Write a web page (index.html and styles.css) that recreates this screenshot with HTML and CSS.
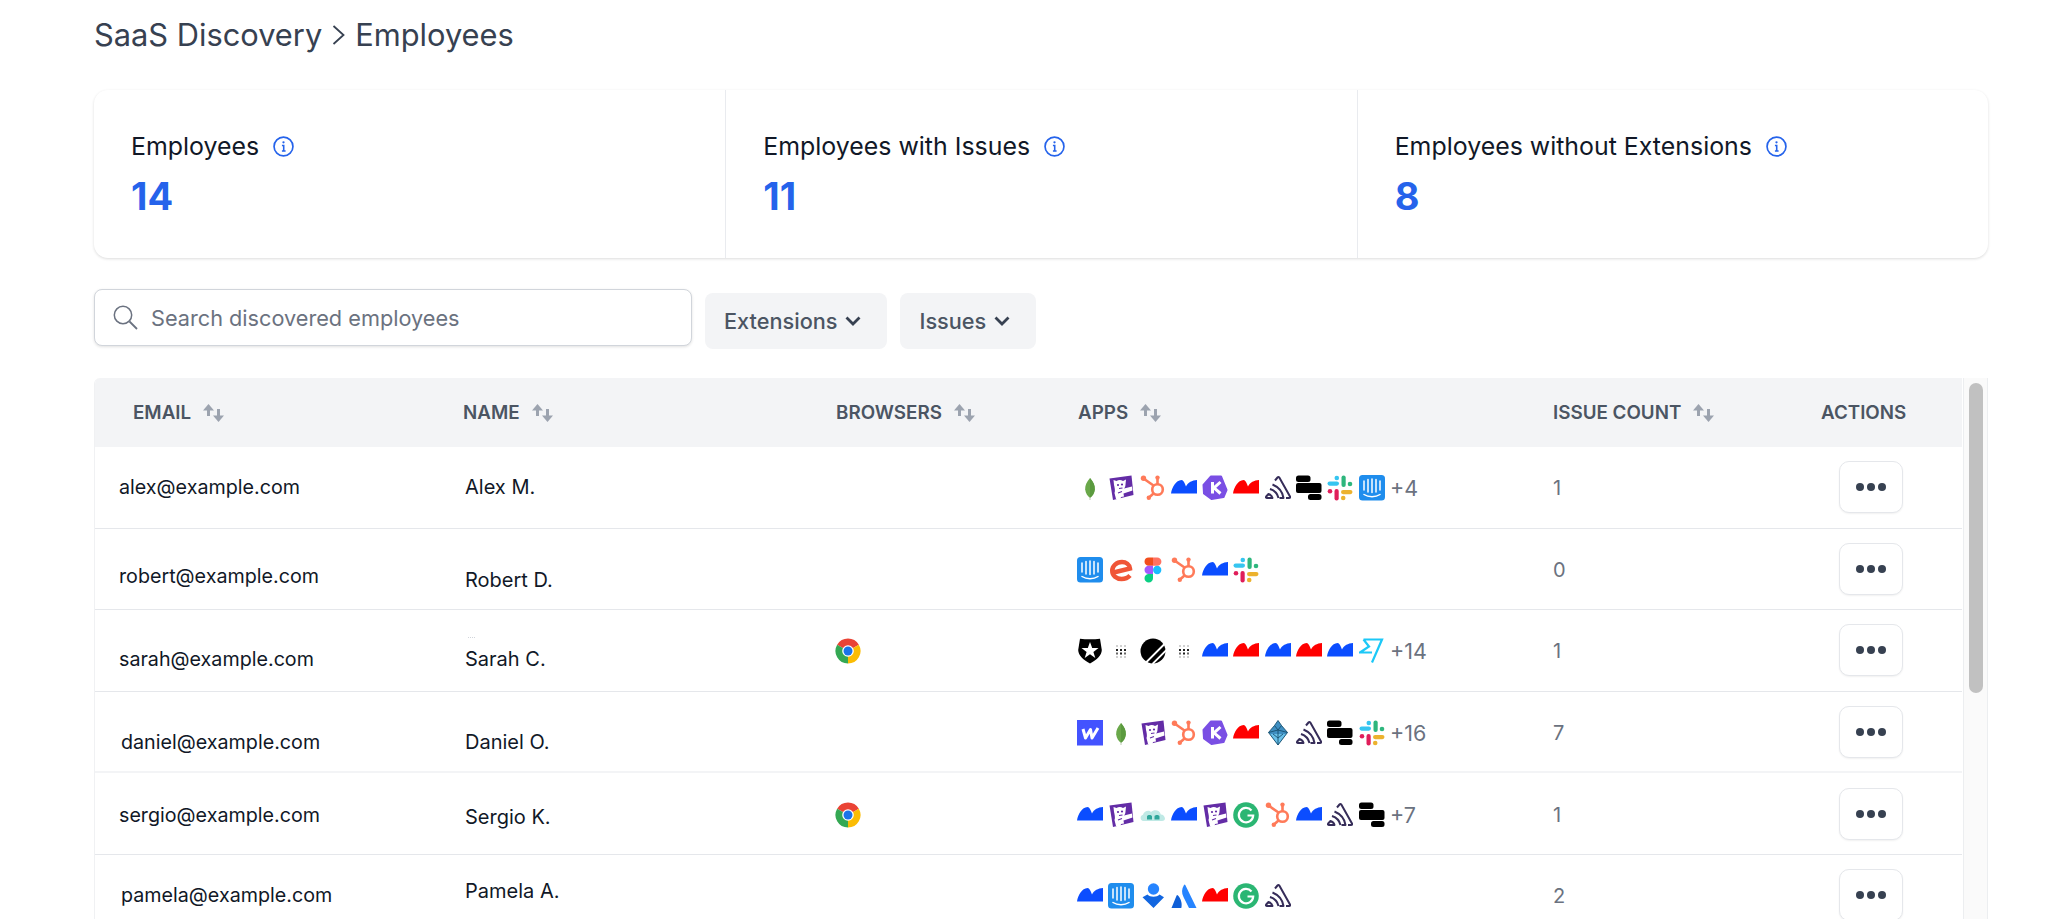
FILE: index.html
```html
<!DOCTYPE html>
<html lang="en">
<head>
  <meta charset="UTF-8">
  <meta name="viewport" content="width=device-width, initial-scale=1.0">
  <title>SaaS Discovery | Employees</title>
  <link rel="stylesheet" href="styles.css">
</head>
<body>
  <svg class="icon-defs" xmlns="http://www.w3.org/2000/svg">
    <symbol id="i-mongo" viewBox="0 0 26 26">
      <path d="M13 3C9.5 7 8 10.5 8.2 14.500C8.500 18.500 11 21.500 13 23C15 21.500 17.500 18.500 17.800 14.500C18 10.500 16.500 7 13 3Z" fill="#6aa84a"/>
      <path d="M13 3C16.500 7 18 10.500 17.800 14.500C17.500 18.500 15 21.500 13 23Z" fill="#5b9a3f"/>
      <path d="M13 22V25" stroke="#b9c9b0" stroke-width="1"/>
    </symbol>
    <symbol id="i-datadog" viewBox="0 0 26 26">
      <path d="M1.500 3.500L23.500 0.500L25.500 20L5 25Z" fill="#632ca6"/>
      <path d="M5.500 5L8.500 6C10.500 4.800 13 4.800 15 6L18 4.500L17.500 9.500C17.500 11 17 12.500 16 13.500L24 11.500L24.500 15.500L15.500 18.500L16 21.500L13 22L12.500 24L8 24L6.500 18C7.500 16 6.500 12 6 10Z" fill="#fff"/>
      <circle cx="10" cy="10" r="1.100" fill="#632ca6"/>
      <circle cx="14" cy="9.500" r="1.100" fill="#632ca6"/>
      <path d="M11 13.500L14.500 13M10 18L14 16.500" stroke="#632ca6" stroke-width="1.100"/>
    </symbol>
    <symbol id="i-hubspot" viewBox="0 0 26 26">
      <g fill="none" stroke="#ff7a59" stroke-width="2.600">
        <circle cx="17.500" cy="14.500" r="5.300"/>
        <path d="M17.500 9V3M13.500 10.500L3.500 3.500M13.500 18.500L9 22.500"/>
      </g>
      <g fill="#ff7a59">
        <circle cx="17.500" cy="2.600" r="2.200"/>
        <circle cx="3.500" cy="3.200" r="2.700"/>
        <circle cx="8.800" cy="22.800" r="2.200"/>
      </g>
    </symbol>
    <symbol id="i-hump" viewBox="0 0 26 26">
      <path d="M0 18.500C1 12 5 5.300 10.500 5C12.500 5 13.700 8 15 11.500C17 7.500 21 5.300 26 5V18.500Z" fill="currentColor"/>
    </symbol>
    <symbol id="i-kustomer" viewBox="0 0 26 26">
      <path d="M9 1.500H19L24.500 15L21.500 22L9.500 24L2 18.500L1.500 10Z" fill="#7a4fe4" stroke="#7a4fe4" stroke-width="2" stroke-linejoin="round"/>
      <path d="M10.500 7V18.500M18.500 7L12 12.800L18.500 18.500" fill="none" stroke="#fff" stroke-width="3"/>
    </symbol>
    <symbol id="i-sentry" viewBox="0 0 26 26">
      <g fill="none" stroke="#362d59" stroke-width="2" stroke-linejoin="round">
        <path d="M10 5.500L12.500 2.500C13 1.800 13.800 1.800 14.300 2.500L25 21.500C25.500 22.500 25 23 24 23H21"/>
        <path d="M7.500 9.500C13.500 12 17.500 16.500 18.500 23H14.500"/>
        <path d="M5 14C9.500 15.500 12.500 18.500 13.500 23"/>
        <path d="M3.500 19C5.500 19.500 7 21 7.500 23H2C1 23 0.700 22.500 1.200 21.500Z"/>
      </g>
    </symbol>
    <symbol id="i-bars" viewBox="0 0 26 26">
      <rect x="0" y="0.500" width="14.500" height="6.500" rx="2.500" fill="#000"/>
      <rect x="0" y="8" width="25.500" height="10" rx="2" fill="#000"/>
      <rect x="12" y="19" width="13.500" height="6" rx="2.500" fill="#000"/>
    </symbol>
    <symbol id="i-slack" viewBox="0 0 26 26">
      <g fill="#36c5f0">
        <rect x="0.500" y="6.500" width="11.500" height="4.200" rx="2.100"/>
        <circle cx="9.800" cy="3" r="2.300"/>
      </g>
      <g fill="#2eb67d">
        <rect x="14.500" y="0.500" width="4.200" height="11.500" rx="2.100"/>
        <circle cx="23" cy="9" r="2.300"/>
      </g>
      <g fill="#ecb22e">
        <rect x="14" y="15" width="11.500" height="4.200" rx="2.100"/>
        <circle cx="16.200" cy="23" r="2.300"/>
      </g>
      <g fill="#e01e5a">
        <rect x="7.500" y="14" width="4.200" height="11.500" rx="2.100"/>
        <circle cx="3" cy="16.300" r="2.300"/>
      </g>
    </symbol>
    <symbol id="i-intercom" viewBox="0 0 26 26">
      <rect x="0" y="0" width="26" height="25.500" rx="3.500" fill="#1f8ded"/>
      <path d="M5 6V15M9 4.500V17M13 4V17.500M17 4.500V17M21 6V15" stroke="#fff" stroke-width="1.500" stroke-linecap="round"/>
      <path d="M5 19.500C9.500 22.500 16.500 22.500 21 19.500" fill="none" stroke="#fff" stroke-width="1.500" stroke-linecap="round"/>
    </symbol>
    <symbol id="i-eventbrite" viewBox="0 0 26 26">
      <path d="M5.500 15.500L22 11.500C21.500 7.500 18 5 14 5C8.500 5 4.200 8.800 4.200 13.800C4.200 18.800 8.500 22 13.500 22C17 22 20 20.800 22 18.500" fill="none" stroke="#f05537" stroke-width="4.400"/>
    </symbol>
    <symbol id="i-figma" viewBox="0 0 26 26">
      <path d="M4.500 4.500A4.250 4.250 0 0 1 8.750 0.500H13V8.800H8.750A4.150 4.150 0 0 1 4.500 4.500Z" fill="#f24e1e"/>
      <path d="M13 0.500H17.250A4.150 4.150 0 0 1 17.250 8.800H13Z" fill="#ff7262"/>
      <path d="M4.500 13A4.150 4.150 0 0 1 8.750 8.800H13V17.100H8.750A4.150 4.150 0 0 1 4.500 13Z" fill="#a259ff"/>
      <circle cx="17.200" cy="13" r="4.150" fill="#1abcfe"/>
      <path d="M4.500 21.300A4.150 4.150 0 0 1 8.750 17.100H13V21.300A4.200 4.200 0 0 1 4.500 21.300Z" fill="#0acf83"/>
    </symbol>
    <symbol id="i-auth0" viewBox="0 0 26 26">
      <path d="M3 0.800C9 1.500 17 1.500 23 0.800L24.800 12C24.800 17 20 22 13 25.500C6 22 1.200 17 1.200 12Z" fill="#000"/>
      <path d="M13 4L15.200 10.100H21.500L16.400 13.900L18.300 20L13 16.300L7.700 20L9.600 13.900L4.500 10.100H10.800Z" fill="#fff"/>
    </symbol>
    <symbol id="i-dots" viewBox="0 0 26 26">
      <g fill="#d0d0d0">
        <rect x="8" y="7" width="2" height="2"/><rect x="12" y="7" width="2" height="2"/><rect x="16" y="7" width="2" height="2"/>
        <rect x="8" y="18" width="2" height="2"/><rect x="12" y="18" width="2" height="2"/><rect x="16" y="18" width="2" height="2"/>
      </g>
      <g fill="#222">
        <rect x="8" y="11" width="2" height="2"/><rect x="12" y="11" width="2" height="2"/><rect x="16" y="11" width="2" height="2"/>
        <rect x="8" y="14.500" width="2" height="2" fill="#666"/><rect x="12" y="14.500" width="2" height="2"/><rect x="16" y="14.500" width="2" height="2" fill="#666"/>
      </g>
    </symbol>
    <symbol id="i-orbit" viewBox="0 0 26 26">
      <circle cx="13" cy="13" r="12.500" fill="#000"/>
      <path d="M6 24.500L25 5.500M12.500 26L26.500 12" stroke="#fff" stroke-width="1.800"/>
    </symbol>
    <symbol id="i-wise" viewBox="0 0 26 26">
      <path d="M4.500 1.500H23L13 24.500M4.500 1.500L10 8.500L1 14.500H13" fill="none" stroke="#1cc8f7" stroke-width="2.200"/>
    </symbol>
    <symbol id="i-webflow" viewBox="0 0 26 26">
      <rect x="0" y="0" width="26" height="25.500" fill="#4353ff"/>
      <path d="M6 9L8.500 18L13.500 9.500L15 18L21 8" fill="none" stroke="#fff" stroke-width="3" stroke-linejoin="round"/>
    </symbol>
    <symbol id="i-gem" viewBox="0 0 26 26">
      <path d="M13 0.500L16.500 5.500L22.500 12.500L13 25L3.500 12.500L9.500 5.500Z" fill="#3f8fc2"/>
      <path d="M5 14H21L13 24.500Z" fill="#6ac1ea"/>
      <path d="M13 0.500L16.500 5.500L22.500 12.500L13 25L3.500 12.500L9.500 5.500ZM9.500 5.500L13 10L16.500 5.500M3.500 12.500L13 10L22.500 12.500M13 10V18M8 14L13 18L18 14M13 18V25" fill="none" stroke="#17506f" stroke-width="0.900" stroke-linejoin="round"/>
    </symbol>
    <symbol id="i-grammarly" viewBox="0 0 26 26">
      <circle cx="13" cy="13" r="12.800" fill="#2bb673"/>
      <path d="M18.500 8.500A7.200 7.200 0 1 0 20.200 13.500H14.500" fill="none" stroke="#fff" stroke-width="2.200"/>
    </symbol>
    <symbol id="i-cloud" viewBox="0 0 26 26">
      <path d="M3.500 19C0 19 -0.500 13.500 3 12.800C4 9 9 7.500 11 10C14 7 20 8 20.800 12.500C25 12.500 27 19 22 19Z" fill="#bfe9e5"/>
      <path d="M7 17.500V14.500C7 12.500 12 12.500 12 14.500V17.500ZM14.500 17.500V14.500C14.500 12.500 19.500 12.500 19.500 14.500V17.500Z" fill="#2fa79b"/>
    </symbol>
    <symbol id="i-opsgenie" viewBox="0 0 26 26">
      <circle cx="13.500" cy="6" r="5.700" fill="#2684ff"/>
      <path d="M2.500 14.300L7.500 11.500C10 14.500 17 14.500 19.500 11.500L24 14.300L13.500 25Z" fill="#1266e0"/>
    </symbol>
    <symbol id="i-atlassian" viewBox="0 0 26 26">
      <path d="M13 2C10.500 6 10.500 10 12.500 14L18 25H25.500L14.300 2C13.900 1.300 13.400 1.300 13 2Z" fill="#2684ff"/>
      <path d="M7 12.500C6.500 11.800 6 11.800 5.600 12.500L0.500 25H10.300C11.500 21 10 15.500 7 12.500Z" fill="#0f5fd7"/>
    </symbol>
    <symbol id="i-chrome" viewBox="0 0 26 26">
      <path d="M13 13L2.170 6.750A12.500 12.500 0 0 1 23.830 6.750Z" fill="#ea4335"/>
      <path d="M13 13L23.830 6.750A12.500 12.500 0 0 1 13 25.500Z" fill="#fbbc04"/>
      <path d="M13 13L13 25.500A12.500 12.500 0 0 1 2.170 6.750Z" fill="#34a853"/>
      <circle cx="13" cy="13" r="5.800" fill="#fff"/>
      <circle cx="13" cy="13" r="4.500" fill="#1a73e8"/>
    </symbol>
    <symbol id="i-info" viewBox="0 0 20 20">
      <circle cx="10" cy="10" r="9" fill="none" stroke="#2563eb" stroke-width="1.600"/>
      <path d="M8.500 9H10.200V14.200M8.500 14.300H12" fill="none" stroke="#2563eb" stroke-width="1.500"/>
      <circle cx="10" cy="6" r="1.100" fill="#2563eb"/>
    </symbol>
    <symbol id="i-sort" viewBox="0 0 21 18">
      <path d="M5.500 12V3" stroke="#9ca3af" stroke-width="3"/>
      <path d="M0 6.500L5.500 0L11 6.500Z" fill="#9ca3af"/>
      <path d="M15.500 5V15" stroke="#9ca3af" stroke-width="3"/>
      <path d="M10 11.500L15.500 18L21 11.500Z" fill="#9ca3af"/>
    </symbol>
    <symbol id="i-chevron" viewBox="0 0 16 12">
      <path d="M1.500 2.500L8 9L14.500 2.500" fill="none" stroke="#374151" stroke-width="2.800"/>
    </symbol>
    <symbol id="i-crumb" viewBox="0 0 13 20">
      <path d="M1.500 1L11.500 10L1.500 19" fill="none" stroke="#374151" stroke-width="1.800"/>
    </symbol>
  </svg>

  <div class="page">
    <h1 class="page-title">SaaS Discovery <svg class="crumb"><use href="#i-crumb"/></svg> Employees</h1>

    <section class="stats">
      <div class="stat">
        <div class="stat-label">Employees <svg class="info"><use href="#i-info"/></svg></div>
        <div class="stat-value">14</div>
      </div>
      <div class="stat">
        <div class="stat-label">Employees with Issues <svg class="info"><use href="#i-info"/></svg></div>
        <div class="stat-value">11</div>
      </div>
      <div class="stat">
        <div class="stat-label">Employees without Extensions <svg class="info"><use href="#i-info"/></svg></div>
        <div class="stat-value">8</div>
      </div>
    </section>

    <div class="toolbar">
      <label class="search">
        <svg class="search-icon" viewBox="0 0 25 25"><circle cx="10" cy="10" r="8.700" fill="none" stroke="#6b7280" stroke-width="1.500"/><path d="M16.500 16.500L24 24" stroke="#6b7280" stroke-width="1.800"/></svg>
        <input type="text" placeholder="Search discovered employees">
      </label>
      <button class="filter-btn">Extensions <svg class="chevron"><use href="#i-chevron"/></svg></button>
      <button class="filter-btn">Issues <svg class="chevron"><use href="#i-chevron"/></svg></button>
    </div>

    <div class="table-wrap">
      <div class="table">
        <div class="table-head">
          <div class="th th-email">Email <svg class="sort"><use href="#i-sort"/></svg></div>
          <div class="th">Name <svg class="sort"><use href="#i-sort"/></svg></div>
          <div class="th th-inset">Browsers <svg class="sort"><use href="#i-sort"/></svg></div>
          <div class="th th-inset">Apps <svg class="sort"><use href="#i-sort"/></svg></div>
          <div class="th">Issue Count <svg class="sort"><use href="#i-sort"/></svg></div>
          <div class="th">Actions</div>
        </div>

        <div class="row">
          <div class="td td-email">alex@example.com</div>
          <div class="td td-name">Alex M.</div>
          <div class="td td-browser"></div>
          <div class="td apps">
            <svg class="app"><use href="#i-mongo"/></svg>
            <svg class="app"><use href="#i-datadog"/></svg>
            <svg class="app"><use href="#i-hubspot"/></svg>
            <svg class="app blue"><use href="#i-hump"/></svg>
            <svg class="app"><use href="#i-kustomer"/></svg>
            <svg class="app red"><use href="#i-hump"/></svg>
            <svg class="app"><use href="#i-sentry"/></svg>
            <svg class="app"><use href="#i-bars"/></svg>
            <svg class="app"><use href="#i-slack"/></svg>
            <svg class="app"><use href="#i-intercom"/></svg>
            <span class="more">+4</span>
          </div>
          <div class="td td-count">1</div>
          <div class="td"><button class="action-btn"><span></span><span></span><span></span></button></div>
        </div>

        <div class="row">
          <div class="td td-email down-7">robert@example.com</div>
          <div class="td td-name down-11">Robert D.</div>
          <div class="td td-browser"></div>
          <div class="td apps">
            <svg class="app"><use href="#i-intercom"/></svg>
            <svg class="app"><use href="#i-eventbrite"/></svg>
            <svg class="app"><use href="#i-figma"/></svg>
            <svg class="app"><use href="#i-hubspot"/></svg>
            <svg class="app blue"><use href="#i-hump"/></svg>
            <svg class="app"><use href="#i-slack"/></svg>
          </div>
          <div class="td td-count">0</div>
          <div class="td"><button class="action-btn"><span></span><span></span><span></span></button></div>
        </div>

        <div class="row">
          <div class="td td-email down-9">sarah@example.com</div>
          <div class="td td-name down-9"><i class="stray-dots"></i>Sarah C.</div>
          <div class="td td-browser"><svg class="app"><use href="#i-chrome"/></svg></div>
          <div class="td apps">
            <svg class="app"><use href="#i-auth0"/></svg>
            <svg class="app"><use href="#i-dots"/></svg>
            <svg class="app"><use href="#i-orbit"/></svg>
            <svg class="app"><use href="#i-dots"/></svg>
            <svg class="app blue"><use href="#i-hump"/></svg>
            <svg class="app red"><use href="#i-hump"/></svg>
            <svg class="app blue"><use href="#i-hump"/></svg>
            <svg class="app red"><use href="#i-hump"/></svg>
            <svg class="app blue"><use href="#i-hump"/></svg>
            <svg class="app"><use href="#i-wise"/></svg>
            <span class="more">+14</span>
          </div>
          <div class="td td-count">1</div>
          <div class="td"><button class="action-btn"><span></span><span></span><span></span></button></div>
        </div>

        <div class="row row-thick">
          <div class="td td-email td-email-wide down-10">daniel@example.com</div>
          <div class="td td-name down-10">Daniel O.</div>
          <div class="td td-browser"></div>
          <div class="td apps">
            <svg class="app"><use href="#i-webflow"/></svg>
            <svg class="app"><use href="#i-mongo"/></svg>
            <svg class="app"><use href="#i-datadog"/></svg>
            <svg class="app"><use href="#i-hubspot"/></svg>
            <svg class="app"><use href="#i-kustomer"/></svg>
            <svg class="app red"><use href="#i-hump"/></svg>
            <svg class="app"><use href="#i-gem"/></svg>
            <svg class="app"><use href="#i-sentry"/></svg>
            <svg class="app"><use href="#i-bars"/></svg>
            <svg class="app"><use href="#i-slack"/></svg>
            <span class="more">+16</span>
          </div>
          <div class="td td-count">7</div>
          <div class="td"><button class="action-btn"><span></span><span></span><span></span></button></div>
        </div>

        <div class="row">
          <div class="td td-email down-1">sergio@example.com</div>
          <div class="td td-name down-3">Sergio K.</div>
          <div class="td td-browser"><svg class="app"><use href="#i-chrome"/></svg></div>
          <div class="td apps">
            <svg class="app blue"><use href="#i-hump"/></svg>
            <svg class="app"><use href="#i-datadog"/></svg>
            <svg class="app"><use href="#i-cloud"/></svg>
            <svg class="app blue"><use href="#i-hump"/></svg>
            <svg class="app"><use href="#i-datadog"/></svg>
            <svg class="app"><use href="#i-grammarly"/></svg>
            <svg class="app"><use href="#i-hubspot"/></svg>
            <svg class="app blue"><use href="#i-hump"/></svg>
            <svg class="app"><use href="#i-sentry"/></svg>
            <svg class="app"><use href="#i-bars"/></svg>
            <span class="more">+7</span>
          </div>
          <div class="td td-count">1</div>
          <div class="td"><button class="action-btn"><span></span><span></span><span></span></button></div>
        </div>

        <div class="row">
          <div class="td td-email td-email-wide">pamela@example.com</div>
          <div class="td td-name up-4">Pamela A.</div>
          <div class="td td-browser"></div>
          <div class="td apps">
            <svg class="app blue"><use href="#i-hump"/></svg>
            <svg class="app"><use href="#i-intercom"/></svg>
            <svg class="app"><use href="#i-opsgenie"/></svg>
            <svg class="app"><use href="#i-atlassian"/></svg>
            <svg class="app red"><use href="#i-hump"/></svg>
            <svg class="app"><use href="#i-grammarly"/></svg>
            <svg class="app"><use href="#i-sentry"/></svg>
          </div>
          <div class="td td-count">2</div>
          <div class="td"><button class="action-btn"><span></span><span></span><span></span></button></div>
        </div>
      </div>

      <div class="scrollbar"><div class="scrollbar-thumb"></div></div>
    </div>
  </div>
</body>
</html>
```

FILE: styles.css
```css
* {
  box-sizing: border-box;
}

html,
body {
  margin: 0;
  height: 100%;
  overflow: hidden;
}

body {
  font-family: 'Inter', sans-serif;
  background-color: #ffffff;
  color: #111827;
}

.icon-defs {
  display: none;
}

.page {
  display: flex;
  flex-direction: column;
  height: 919px;
  padding: 17px 60px 0 94px;
}

.page-title {
  display: flex;
  align-items: center;
  gap: 10px;
  margin: 0;
  font-size: 30.8px;
  line-height: 36px;
  font-weight: 400;
  color: #374151;
}

.crumb {
  width: 13px;
  height: 20px;
}

/* stat cards */
.stats {
  display: grid;
  grid-template-columns: repeat(3, 1fr);
  height: 168px;
  margin-top: 37px;
  background-color: #ffffff;
  border-radius: 14px;
  box-shadow: 0 1px 3px rgba(0, 0, 0, 0.14);
}

.stat {
  padding: 41px 37px 0;
  border-left: 1px solid #e9ebef;
}

.stat:first-child {
  padding-left: 37px;
  border-left: none;
}

.stat-label {
  display: flex;
  align-items: center;
  gap: 14px;
  font-size: 24.9px;
  line-height: 30px;
}

.info {
  width: 21px;
  height: 21px;
}

.stat-value {
  margin-top: 11px;
  font-size: 38px;
  line-height: 48px;
  font-weight: 700;
  color: #2563eb;
}

/* search and filters */
.toolbar {
  display: flex;
  align-items: flex-start;
  gap: 13px;
  margin-top: 31px;
  height: 60px;
}

.search {
  display: flex;
  align-items: center;
  gap: 13px;
  width: 598px;
  height: 57px;
  padding: 0 18px;
  background-color: #ffffff;
  border: 1px solid #d1d5db;
  border-radius: 8px;
  box-shadow: 0 1px 3px rgba(0, 0, 0, 0.12);
}

.search-icon {
  width: 25px;
  height: 25px;
  flex-shrink: 0;
}

.search input {
  flex: 1;
  border: none;
  outline: none;
  padding: 0;
  font-family: inherit;
  font-size: 21.7px;
  color: #374151;
}

.search input::placeholder {
  color: #6b7280;
  opacity: 1;
}

.filter-btn {
  display: flex;
  align-items: center;
  gap: 8px;
  height: 56px;
  margin-top: 4px;
  padding: 0 26px 0 19px;
  border: none;
  border-radius: 8px;
  background-color: #f3f4f6;
  font-family: inherit;
  font-size: 21.7px;
  font-weight: 500;
  color: #4b5563;
}

.chevron {
  width: 16px;
  height: 12px;
}

/* table */
.table-wrap {
  display: flex;
  flex: 1;
  min-height: 0;
  margin-top: 29px;
  overflow: hidden;
  border-left: 1px solid #f0f1f3;
  border-top-left-radius: 6px;
}

.table {
  width: 1867px;
  flex-shrink: 0;
}

.table-head,
.row {
  display: grid;
  grid-template-columns: 368px 372px 242px 476px 268px 141px;
}

.table-head {
  height: 69px;
  background-color: #f3f4f6;
}

.th {
  display: flex;
  align-items: center;
  gap: 12px;
  font-size: 18.8px;
  font-weight: 600;
  text-transform: uppercase;
  color: #4b5563;
}

.th-email {
  padding-left: 38px;
}

.th-inset {
  padding-left: 1px;
}

.sort {
  width: 21px;
  height: 18px;
}

.row {
  height: 81.6px;
  border-bottom: 1px solid #e5e7eb;
}

.row-thick {
  border-bottom: 2px solid #f3f4f6;
}

.td {
  display: flex;
  align-items: center;
  font-size: 20px;
  color: #111827;
}

.td-email {
  padding-left: 24px;
  font-size: 19.7px;
}

.td-email-wide {
  padding-left: 26px;
}

.td-name {
  position: relative;
  padding-left: 2px;
}

/* text that sits off centre in its row */
.down-1 { padding-top: 2px; }
.down-3 { padding-top: 6px; }
.down-7 { padding-top: 14px; }
.down-9 { padding-top: 18px; }
.down-10 { padding-top: 20px; }
.down-11 { padding-top: 22px; }
.up-4 { padding-bottom: 8px; }

.stray-dots {
  position: absolute;
  left: 5px;
  top: 27px;
  width: 7px;
  border-top: 1px dotted #d1d5db;
}

.apps,
.td-browser,
.td-count {
  padding-top: 2px;
}

.apps {
  gap: 5.3px;
}

.app {
  width: 26px;
  height: 26px;
  flex-shrink: 0;
}

.blue {
  color: #0b4dff;
}

.red {
  color: #ff0000;
}

.more {
  font-size: 21.5px;
  color: #6b7280;
}

.td-count {
  color: #6b7280;
}

.action-btn {
  display: flex;
  align-items: center;
  justify-content: center;
  gap: 3px;
  width: 64px;
  height: 52px;
  margin-left: 18px;
  padding: 0;
  background-color: #ffffff;
  border: 1px solid #e5e7eb;
  border-radius: 10px;
  box-shadow: 0 1px 2px rgba(0, 0, 0, 0.06);
}

.action-btn span {
  width: 8px;
  height: 8px;
  border-radius: 50%;
  background-color: #374151;
}

.scrollbar {
  width: 25px;
  margin-left: 1px;
  padding: 5px 4px 0 5px;
  background-color: #fafafa;
  border-left: 1px solid #eceef0;
  border-right: 1px solid #eceef0;
}

.scrollbar-thumb {
  width: 14px;
  height: 310px;
  border-radius: 7px;
  background-color: #c1c1c1;
}
```
